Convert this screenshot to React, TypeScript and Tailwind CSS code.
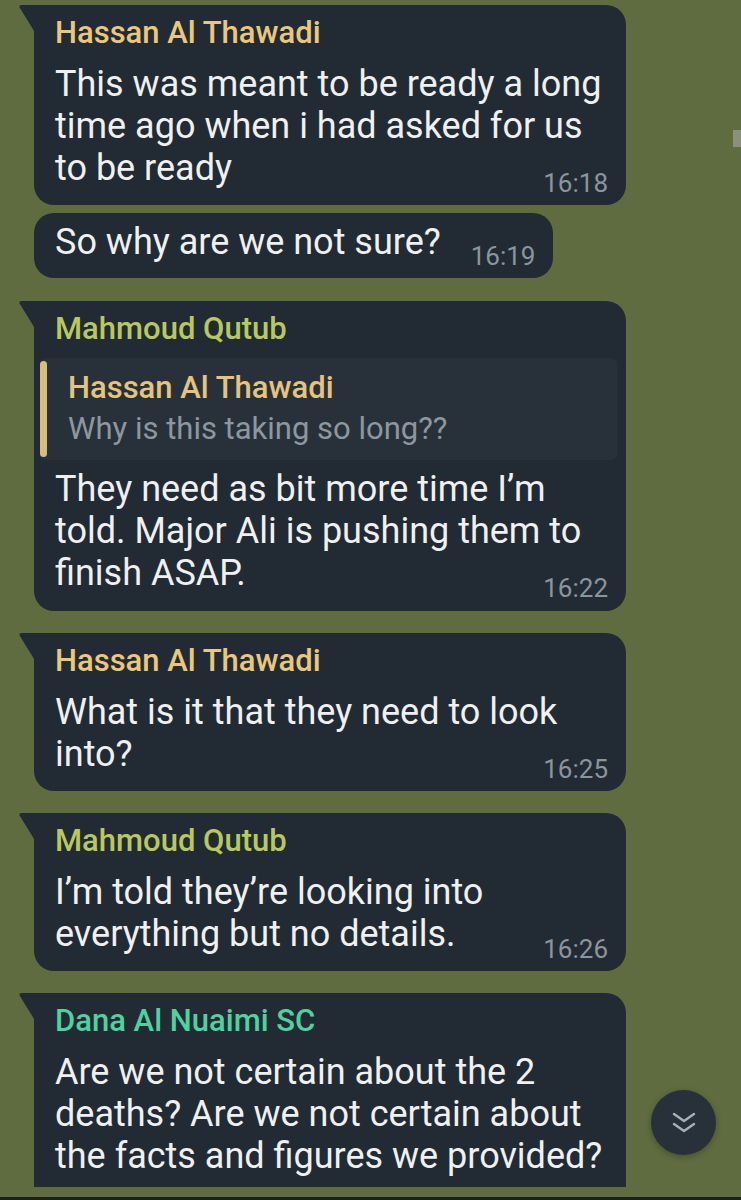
import React from 'react';
import clsx from 'clsx';

const BUBBLE = '#222b33';

type BubbleProps = {
  tail?: boolean;
  full?: boolean;
  cut?: boolean;
  className?: string;
  children: React.ReactNode;
};

const Bubble = ({ tail = true, full = true, cut = false, className, children }: BubbleProps) => (
  <div className={clsx('flex items-start pl-[19px]', className)}>
    {tail ? (
      <svg width="16" height="28" viewBox="0 0 16 28" className="-mr-px shrink-0">
        <path d="M16 0H2.6C0.7 0-0.2 1.5 0.9 3.1L16 27.5Z" fill={BUBBLE} />
      </svg>
    ) : (
      <div className="w-[15px] shrink-0" />
    )}
    <div
      className={clsx(
        'bg-[#222b33]',
        full && 'w-[592px]',
        cut ? 'rounded-tr-[20px]' : tail ? 'rounded-[20px] rounded-tl-none' : 'rounded-[20px]'
      )}
    >
      {children}
    </div>
  </div>
);

const Name = ({ color, children }: { color: string; children: React.ReactNode }) => (
  <div className={clsx('pl-[21px] pt-[11px] text-[31px] font-medium leading-[34px]', color)}>{children}</div>
);

const Body = ({ children, className }: { children: React.ReactNode; className?: string }) => (
  <div className={clsx('pl-[21px] pr-[18px] text-[36px] leading-[42px] text-[#eef0f2]', className)}>{children}</div>
);

const Time = ({ children }: { children: React.ReactNode }) => (
  <div className="-mt-[21px] flex justify-end pb-[7px] pr-[18px] text-[26px] leading-[30px] text-[#8b959d]">
    {children}
  </div>
);

const ScrollDown = () => (
  <div className="absolute left-[651px] top-[1090px] flex h-[65px] w-[65px] items-center justify-center rounded-full bg-[#28313a] shadow-[0_2px_6px_rgba(0,0,0,0.25)]">
    <svg width="24" height="24" viewBox="0 0 24 24" fill="none" stroke="#a8b0b7" strokeWidth="2.4" strokeLinecap="round" strokeLinejoin="round">
      <polyline points="2,3 12,10 22,3" />
      <polyline points="2,13 12,20 22,13" />
    </svg>
  </div>
);

export default function App() {
  return (
    <div className="relative flex h-[1200px] w-[741px] flex-col overflow-hidden bg-[#5e6c3f] font-['Roboto',sans-serif]">
      <div className="flex flex-1 flex-col pt-[5px]">
        <Bubble>
          <Name color="text-[#e9c87c]">Hassan Al Thawadi</Name>
          <Body className="mt-[13px]">
            This was meant to be ready a long
            <br />
            time ago when i had asked for us
            <br />
            to be ready
          </Body>
          <Time>16:18</Time>
        </Bubble>

        <Bubble tail={false} full={false} className="mt-[8px]">
          <div className="flex items-start pb-[7px] pl-[21px] pr-[18px] pt-[8px]">
            <div className="text-[36px] leading-[42px] text-[#eef0f2]">So why are we not sure?</div>
            <div className="ml-[30px] mt-[20px] text-[26px] leading-[30px] text-[#8b959d]">16:19</div>
          </div>
        </Bubble>

        <Bubble className="mt-[23px]">
          <Name color="text-[#b7c95d]">Mahmoud Qutub</Name>
          <div className="ml-[6px] mr-[9px] mt-[12px] flex rounded-[6px] bg-[#283139]">
            <div className="my-[3px] w-[7px] shrink-0 rounded-full bg-[#d8bc78]" />
            <div className="pb-[14px] pl-[21px] pt-[13px]">
              <div className="text-[31px] font-medium leading-[34px] text-[#e4c47e]">Hassan Al Thawadi</div>
              <div className="mt-[7px] text-[31px] leading-[34px] text-[#8c97a0]">Why is this taking so long??</div>
            </div>
          </div>
          <Body className="mt-[8px]">
            They need as bit more time I’m
            <br />
            told. Major Ali is pushing them to
            <br />
            finish ASAP.
          </Body>
          <div className="pb-[1px]">
            <Time>16:22</Time>
          </div>
        </Bubble>

        <Bubble className="mt-[22px]">
          <Name color="text-[#e9c87c]">Hassan Al Thawadi</Name>
          <Body className="mt-[13px]">
            What is it that they need to look
            <br />
            into?
          </Body>
          <Time>16:25</Time>
        </Bubble>

        <Bubble className="mt-[22px]">
          <Name color="text-[#b7c95d]">Mahmoud Qutub</Name>
          <Body className="mt-[13px]">
            I’m told they’re looking into
            <br />
            everything but no details.
          </Body>
          <Time>16:26</Time>
        </Bubble>

        <Bubble cut className="mt-[22px]">
          <Name color="text-[#4fd1a1]">Dana Al Nuaimi SC</Name>
          <Body className="mt-[13px] pb-[10px]">
            Are we not certain about the 2
            <br />
            deaths? Are we not certain about
            <br />
            the facts and figures we provided?
          </Body>
        </Bubble>
      </div>
      <div className="h-[3px] bg-[#1b201b]" />

      <div className="absolute left-[733px] top-[130px] h-[17px] w-[8px] bg-[#8a9079]" />
      <ScrollDown />
    </div>
  );
}
